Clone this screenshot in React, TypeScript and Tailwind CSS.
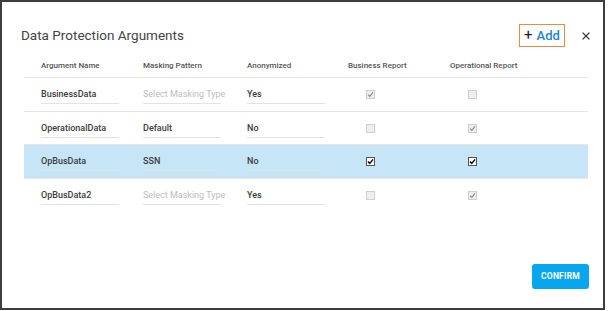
import React from 'react';

type Row = {
    name: string;
    masking: string;
    placeholder?: boolean;
    anon: string;
    business: boolean;
    operational: boolean;
    selected?: boolean;
};

const rows: Row[] = [
    { name: 'BusinessData', masking: 'Select Masking Type', placeholder: true, anon: 'Yes', business: true, operational: false },
    { name: 'OperationalData', masking: 'Default', anon: 'No', business: false, operational: true },
    { name: 'OpBusData', masking: 'SSN', anon: 'No', business: true, operational: true, selected: true },
    { name: 'OpBusData2', masking: 'Select Masking Type', placeholder: true, anon: 'Yes', business: false, operational: true },
];

const cols = 'grid grid-cols-[102px_104px_101px_102px_1fr] pl-[17px]';

const Check = ({ checked, active }: { checked: boolean; active?: boolean }) => (
    <div
        className={
            active
                ? 'mt-[12px] w-[9px] h-[9px] border border-[#555] bg-white flex items-center justify-center'
                : 'mt-[12px] w-[9px] h-[9px] border border-[#cfcfcf] bg-[#eeeeee] flex items-center justify-center'
        }
    >
        {checked && (
            <svg width="7" height="7" viewBox="0 0 7 7">
                <path
                    d="M1 3.6 L2.8 5.4 L6 1.4"
                    fill="none"
                    stroke={active ? '#111' : '#8a8a8a'}
                    strokeWidth={active ? 1.5 : 1.1}
                />
            </svg>
        )}
    </div>
);

const Field = ({ text, muted }: { text: string; muted?: boolean }) => (
    <div
        className={
            muted
                ? 'mt-[10px] w-[78px] h-[16px] border-b border-[#e2e2e2] leading-[12px] text-[9px] text-[#bdbdbd] whitespace-nowrap'
                : 'mt-[10px] w-[78px] h-[16px] border-b border-[#e2e2e2] leading-[12px] text-[9px] font-medium text-[#3c3c3c] whitespace-nowrap'
        }
    >
        {text}
    </div>
);

export default function App() {
    return (
        <div className="w-[608px] h-[311px] bg-white" style={{ fontFamily: 'Roboto, "Open Sans", sans-serif' }}>
            <div className="w-[605px] h-[310px] border-2 border-[#3d3d3d] flex flex-col">
                {/* Title bar */}
                <div className="flex items-center h-[23px] mt-[22px] pl-[19px] pr-[13px]">
                    <h2 className="text-[13.5px] text-[#444] leading-none">Data Protection Arguments</h2>
                    <div className="ml-auto flex items-center h-[23px] w-[46px] border-[1.5px] border-[#ee8a3c] justify-center gap-[4px]">
                        <span className="text-[15px] text-[#222] leading-none">+</span>
                        <span className="text-[13px] font-medium text-[#1f86d1] leading-none">Add</span>
                    </div>
                    <svg className="ml-[17px]" width="8" height="8" viewBox="0 0 8 8">
                        <path d="M0.6 0.6 L7.4 7.4 M7.4 0.6 L0.6 7.4" stroke="#333" strokeWidth="1.3" />
                    </svg>
                </div>

                {/* Table */}
                <div className="ml-[22px] w-[564px]">
                    <div className={`${cols} h-[31px] items-end pb-[6px] border-b border-[#e6e6e6] text-[8px] font-medium text-[#555] leading-[10px]`}>
                        <div>Argument Name</div>
                        <div>Masking Pattern</div>
                        <div>Anonymized</div>
                        <div>Business Report</div>
                        <div>Operational Report</div>
                    </div>
                    {rows.map((r, i) => (
                        <div
                            key={r.name}
                            className={`${cols} h-[33.5px] ${i < rows.length - 1 ? 'border-b border-[#e6e6e6]' : ''} ${r.selected ? 'bg-[#c6e6f7]' : ''}`}
                        >
                            <div><Field text={r.name} /></div>
                            <div><Field text={r.masking} muted={r.placeholder} /></div>
                            <div><Field text={r.anon} /></div>
                            <div className="pl-[18px]"><Check checked={r.business} active={r.selected} /></div>
                            <div className="pl-[18px]"><Check checked={r.operational} active={r.selected} /></div>
                        </div>
                    ))}
                </div>

                <div className="mt-auto flex justify-end pr-[14px] pb-[19px]">
                    <button className="w-[57px] h-[25px] rounded-[3px] bg-[#08a6ef] text-white text-[8.5px] font-bold tracking-[0.2px]">
                        CONFIRM
                    </button>
                </div>
            </div>
        </div>
    );
}
